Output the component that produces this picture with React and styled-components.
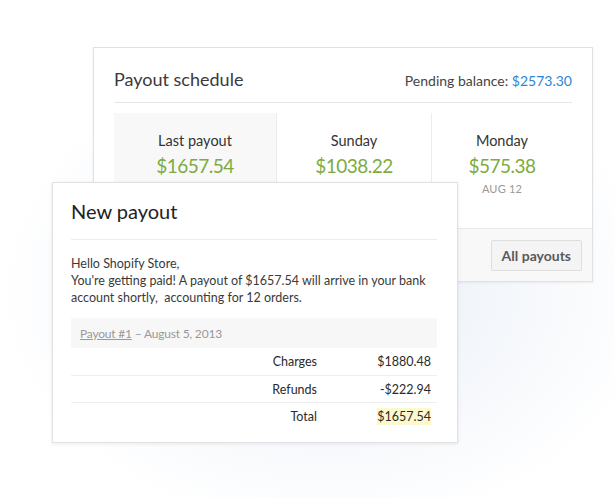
import React from "react";
import styled, { createGlobalStyle } from "styled-components";

const Global = createGlobalStyle`
  html, body { margin: 0; padding: 0; background: #fff; }
  body { font-family: "Lato", "Open Sans", sans-serif; color: #333; }
  * { box-sizing: border-box; }
`;

const Stage = styled.div`
  position: relative;
  width: 615px;
  height: 498px;
  overflow: hidden;
  padding: 47px 0 0 93px;
  background:
    radial-gradient(ellipse 330px 240px at 330px 290px, rgba(224, 232, 244, 0.75), rgba(255,255,255,0) 100%),
    #fff;
`;

const Card = styled.div`
  background: #fff;
  border: 1px solid #e1e1e1;
  box-shadow: 0 1px 3px rgba(0, 0, 0, 0.06);
`;

const ScheduleCard = styled(Card)`
  width: 500px;
  height: 235px;
  display: flex;
  flex-direction: column;
`;

const ScheduleHeader = styled.div`
  display: flex;
  justify-content: space-between;
  align-items: baseline;
  margin: 0 20px;
  padding: 20px 0 12px;
  border-bottom: 1px solid #e6e6e6;
`;

const ScheduleTitle = styled.h2`
  margin: 0;
  font-size: 18px;
  font-weight: 400;
  color: #3a3a3a;
`;

const Pending = styled.div`
  font-size: 14px;
  color: #444;
`;

const Blue = styled.span`
  color: #2a85d8;
`;

const Columns = styled.div`
  display: grid;
  grid-template-columns: 162px 155px 1fr;
  margin: 10px 20px 0;
  flex: 1;
`;

const Column = styled.div`
  text-align: center;
  padding-top: 19px;
  background: ${(p) => (p.$active ? "#f8f8f8" : "#fff")};
  border-left: ${(p) => (p.$first ? "none" : "1px solid #ececec")};
`;

const ColLabel = styled.div`
  font-size: 14.5px;
  color: #333;
  line-height: 18px;
`;

const ColAmount = styled.div`
  font-size: 19px;
  font-weight: 400;
  letter-spacing: -0.5px;
  color: #7cab42;
  line-height: 24px;
  margin-top: 4px;
`;

const ColDate = styled.div`
  font-size: 11px;
  color: #999;
  margin-top: 4px;
  letter-spacing: 0.2px;
`;

const Footer = styled.div`
  height: 53px;
  background: #f8f8f8;
  border-top: 1px solid #e8e8e8;
  display: flex;
  justify-content: flex-end;
  align-items: center;
  padding: 0 10px;
`;

const Button = styled.button`
  height: 31px;
  padding: 0 10px;
  font-family: inherit;
  font-size: 14px;
  font-weight: 700;
  color: #5a5a5a;
  background: #f4f4f4;
  border: 1px solid #dedede;
  border-radius: 2px;
`;

const PayoutCard = styled(Card)`
  position: absolute;
  left: 52px;
  top: 182px;
  width: 406px;
  height: 261px;
  padding: 0 20px 0 18px;
  box-shadow: 0 1px 4px rgba(0, 0, 0, 0.08);
`;

const PayoutTitle = styled.h1`
  margin: 0;
  padding: 16px 0 16px;
  font-size: 20px;
  font-weight: 400;
  color: #222;
  border-bottom: 1px solid #ececec;
`;

const Message = styled.p`
  margin: 15px 0 12px;
  font-size: 12.5px;
  line-height: 17px;
  color: #3a3a3a;
`;

const Summary = styled.div`
  display: flex;
  flex-direction: column;
`;

const SummaryHead = styled.div`
  height: 30px;
  background: #f7f7f7;
  display: flex;
  align-items: center;
  padding-left: 9px;
  font-size: 12px;
  letter-spacing: -0.2px;
  color: #999;
`;

const Link = styled.span`
  text-decoration: underline;
`;

const Row = styled.div`
  display: grid;
  grid-template-columns: 1fr 114px;
  align-items: center;
  height: 27px;
  font-size: 12.5px;
  color: #2a2a2a;
  border-top: ${(p) => (p.$first ? "none" : "1px solid #efefef")};
  padding-right: 6px;
`;

const Label = styled.span`
  text-align: right;
`;

const Value = styled.span`
  justify-self: end;
  background: ${(p) => (p.$highlight ? "#fdf9cf" : "transparent")};
  padding: 1px 0;
`;

export default function App() {
  return (
    <>
      <Global />
      <Stage>
        <ScheduleCard>
          <ScheduleHeader>
            <ScheduleTitle>Payout schedule</ScheduleTitle>
            <Pending>
              Pending balance: <Blue>$2573.30</Blue>
            </Pending>
          </ScheduleHeader>
          <Columns>
            <Column $active $first>
              <ColLabel>Last payout</ColLabel>
              <ColAmount>$1657.54</ColAmount>
            </Column>
            <Column>
              <ColLabel>Sunday</ColLabel>
              <ColAmount>$1038.22</ColAmount>
            </Column>
            <Column>
              <ColLabel>Monday</ColLabel>
              <ColAmount>$575.38</ColAmount>
              <ColDate>AUG 12</ColDate>
            </Column>
          </Columns>
          <Footer>
            <Button>All payouts</Button>
          </Footer>
        </ScheduleCard>

        <PayoutCard>
          <PayoutTitle>New payout</PayoutTitle>
          <Message>
            Hello Shopify Store,
            <br />
            You're getting paid! A payout of $1657.54 will arrive in your bank
            account shortly,&nbsp; accounting for 12 orders.
          </Message>
          <Summary>
            <SummaryHead>
              <Link>Payout #1</Link>&nbsp;– August 5, 2013
            </SummaryHead>
            <Row $first>
              <Label>Charges</Label>
              <Value>$1880.48</Value>
            </Row>
            <Row>
              <Label>Refunds</Label>
              <Value>-$222.94</Value>
            </Row>
            <Row>
              <Label>Total</Label>
              <Value $highlight>$1657.54</Value>
            </Row>
          </Summary>
        </PayoutCard>
      </Stage>
    </>
  );
}
